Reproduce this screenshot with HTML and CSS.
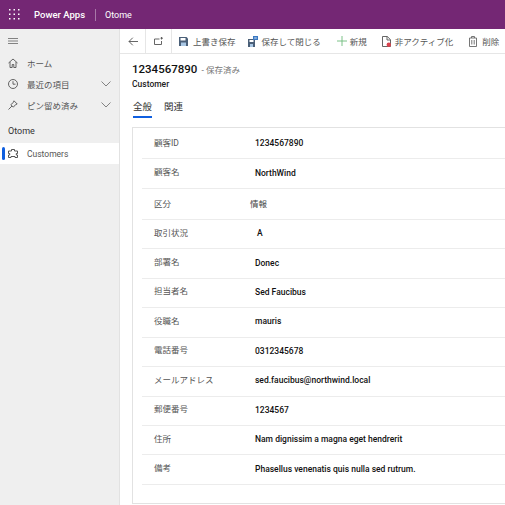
FILE: index.html
```html
<!DOCTYPE html>
<html lang="ja">
<head>
  <meta charset="UTF-8">
  <title>Customer - Power Apps</title>
  <link rel="stylesheet" href="styles.css">
</head>
<body>

<header class="topbar">
  <svg class="waffle" width="11" height="11" viewBox="0 0 11 11" fill="#fff">
    <rect x="0" y="0" width="1.500" height="1.500"/><rect x="4.500" y="0" width="1.500" height="1.500"/><rect x="9" y="0" width="1.500" height="1.500"/>
    <rect x="0" y="4.500" width="1.500" height="1.500"/><rect x="4.500" y="4.500" width="1.500" height="1.500"/><rect x="9" y="4.500" width="1.500" height="1.500"/>
    <rect x="0" y="9" width="1.500" height="1.500"/><rect x="4.500" y="9" width="1.500" height="1.500"/><rect x="9" y="9" width="1.500" height="1.500"/>
  </svg>
  <span class="brand">Power Apps</span>
  <span class="app-name">Otome</span>
</header>

<div class="main">
  <nav class="sidebar">
    <svg class="hamburger" width="10" height="6" viewBox="0 0 10 6" stroke="#666" stroke-width=".8" fill="none">
      <path d="M0 .5h10M0 3h10M0 5.500h10"/>
    </svg>
    <div class="nav-item first">
      <svg width="10" height="10" viewBox="0 0 10 10" fill="none" stroke="#555" stroke-width=".9"><path d="M.5 5L5 1l4.500 4M2 4v5.500h2.200V6.500h1.600v3H8V4"/></svg>
      <span>ホーム</span>
    </div>
    <div class="nav-item">
      <svg width="10" height="10" viewBox="0 0 10 10" fill="none" stroke="#555" stroke-width=".9"><circle cx="5" cy="5" r="4.500"/><path d="M5 2.200v3h2.500"/></svg>
      <span>最近の項目</span>
      <svg class="chevron" width="10" height="6" viewBox="0 0 10 6" fill="none" stroke="#666" stroke-width=".8"><path d="M.5.500L5 5 9.500.500"/></svg>
    </div>
    <div class="nav-item">
      <svg width="10" height="10" viewBox="0 0 10 10" fill="none" stroke="#555" stroke-width=".9"><path d="M6 .8L9.200 4 7.500 4.700 5.300 7.200 2.800 4.700 5.300 2.500zM4 6L.5 9.500"/></svg>
      <span>ピン留め済み</span>
      <svg class="chevron" width="10" height="6" viewBox="0 0 10 6" fill="none" stroke="#666" stroke-width=".8"><path d="M.5.500L5 5 9.500.500"/></svg>
    </div>
    <div class="nav-group">Otome</div>
    <div class="nav-item active">
      <svg width="10" height="10" viewBox="0 0 10 10" fill="none" stroke="#444" stroke-width=".9"><path d="M3.500.5h3v1.500h3v2.500H8.300v1.500h1.200v2.500h-2.500V7.500H3v1H.5V6h1.200V4.500H.5V2h3z"/></svg>
      <span>Customers</span>
    </div>
  </nav>

  <div class="content">
    <div class="cmdbar">
      <div class="cmd-nav">
        <svg width="10" height="9" viewBox="0 0 10 9" fill="none" stroke="#555" stroke-width=".9"><path d="M10 4.500H1M4.800.7L1 4.500l3.800 3.800"/></svg>
      </div>
      <div class="cmd-nav">
        <svg width="9" height="8" viewBox="0 0 9 8" fill="none" stroke="#555" stroke-width=".9"><path d="M5.500 2H.5v5.500h7V4M7.500 0v2.500M6.500 1.200h2.500"/></svg>
      </div>
      <div class="cmd save">
        <svg width="9" height="9" viewBox="0 0 9 9"><path d="M0 0h7.500L9 1.500V9H0z" fill="#4a5f78"/><path d="M1.500 1h5v2.500h-5z" fill="#fff"/><path d="M2 5.500h5V9H2z" fill="#a9c7e4"/></svg>
        <span>上書き保存</span>
      </div>
      <div class="cmd save-close">
        <svg width="10" height="11" viewBox="0 0 10 11"><path d="M0 3h7v8H0z" fill="#4a5f78"/><path d="M1.500 4h4v2h-4z" fill="#fff"/><path d="M2 8h3v3H2z" fill="#a9c7e4"/><path d="M5 0h5v4H5z" fill="#3a78c2"/><path d="M6.200 2h2.600" stroke="#fff" stroke-width=".8"/></svg>
        <span>保存して閉じる</span>
      </div>
      <div class="cmd new">
        <svg width="10" height="10" viewBox="0 0 10 10" fill="none" stroke="#6dbb7c" stroke-width=".9"><path d="M5 0v10M0 5h10"/></svg>
        <span>新規</span>
      </div>
      <div class="cmd deactivate">
        <svg width="9" height="11" viewBox="0 0 9 11"><path d="M.5.500h4.800L8.500 3.700v6.800H.5zM5 .5v3.500h3.500" fill="none" stroke="#555" stroke-width=".9"/><circle cx="6.800" cy="8.800" r="2.200" fill="#d9434e"/></svg>
        <span>非アクティブ化</span>
      </div>
      <div class="cmd delete">
        <svg width="8" height="11" viewBox="0 0 8 11" fill="none" stroke="#666" stroke-width=".9"><path d="M.5 2h7v8.500h-7zM2.500 2V.5h3V2M2.800 4v4.500M5.200 4v4.500"/></svg>
        <span>削除</span>
      </div>
    </div>

    <div class="record-head">
      <div class="record-title">
        <span class="record-id">1234567890</span>
        <span class="record-state">- 保存済み</span>
      </div>
      <div class="record-type">Customer</div>
    </div>

    <div class="tabs">
      <div class="tab selected">全般</div>
      <div class="tab">関連</div>
    </div>

    <section class="card">
      <div class="row"><div class="label">顧客ID</div><div class="value">1234567890</div></div>
      <div class="row"><div class="label">顧客名</div><div class="value">NorthWind</div></div>
      <div class="row tall"><div class="label">区分</div><div class="value plain">情報</div></div>
      <div class="row"><div class="label">取引状況</div><div class="value option">A</div></div>
      <div class="row"><div class="label">部署名</div><div class="value">Donec</div></div>
      <div class="row"><div class="label">担当者名</div><div class="value">Sed Faucibus</div></div>
      <div class="row"><div class="label">役職名</div><div class="value">mauris</div></div>
      <div class="row"><div class="label">電話番号</div><div class="value">0312345678</div></div>
      <div class="row"><div class="label">メールアドレス</div><div class="value">sed.faucibus@northwind.local</div></div>
      <div class="row"><div class="label">郵便番号</div><div class="value">1234567</div></div>
      <div class="row"><div class="label">住所</div><div class="value">Nam dignissim a magna eget hendrerit</div></div>
      <div class="row"><div class="label">備考</div><div class="value">Phasellus venenatis quis nulla sed rutrum.</div></div>
    </section>
  </div>
</div>

</body>
</html>
```

FILE: styles.css
```css
body {
  margin: 0;
  width: 505px;
  height: 505px;
  overflow: hidden;
  background-color: white;
  color: #222;
  font-family: Roboto, "Noto Sans CJK JP", sans-serif;
  font-size: 8.500px;
  display: flex;
  flex-direction: column;
}

.topbar {
  height: 29px;
  flex: none;
  background-color: #742774;
  color: white;
  display: flex;
  align-items: center;
}

.waffle {
  margin-left: 9px;
}

.brand {
  margin-left: 14px;
  font-size: 9.500px;
  font-weight: 500;
}

.app-name {
  margin-left: 10px;
  padding-left: 9px;
  border-left: 1px solid #a878a8;
  line-height: 12px;
  font-size: 9px;
}

.main {
  flex: 1;
  display: flex;
  min-height: 0;
}

.sidebar {
  width: 119px;
  flex: none;
  background-color: #efefef;
  border-right: 1px solid #e2e2e2;
}

.hamburger {
  display: block;
  margin: 9px 0 0 8px;
}

.nav-item {
  height: 21px;
  display: flex;
  align-items: center;
  padding-left: 8px;
  gap: 9px;
  position: relative;
}

.nav-item.first {
  margin-top: 8px;
}

.nav-item span {
  color: #555;
}

.chevron {
  position: absolute;
  right: 8px;
  top: 8px;
}

.nav-group {
  margin-top: 6px;
  height: 21px;
  padding-left: 8px;
  font-size: 9px;
  line-height: 21px;
  color: #333;
}

.nav-item.active {
  background-color: white;
  margin-top: 1px;
}

.nav-item.active::before {
  content: "";
  position: absolute;
  left: 2px;
  top: 4px;
  width: 3px;
  height: 13px;
  border-radius: 2px;
  background-color: #0f5fe0;
}

.content {
  flex: 1;
  min-width: 0;
}

.cmdbar {
  height: 24px;
  display: flex;
  align-items: center;
  border-bottom: 1px solid #e6e6e6;
  white-space: nowrap;
}

.cmd-nav {
  width: 25px;
  height: 24px;
  border-right: 1px solid #e6e6e6;
  display: flex;
  align-items: center;
  justify-content: center;
  flex: none;
}

.cmd {
  display: flex;
  align-items: center;
  gap: 5px;
  color: #555;
  flex: none;
}

.cmd.save {
  margin-left: 7px;
}

.cmd.save-close {
  margin-left: 12px;
  gap: 4px;
}

.cmd.new {
  margin-left: 16px;
  gap: 3px;
}

.cmd.deactivate {
  margin-left: 15px;
  gap: 4px;
}

.cmd.delete {
  margin-left: 16px;
}

.record-head {
  padding: 8px 0 0 12px;
}

.record-id {
  font-size: 11.500px;
  font-weight: 500;
  color: #111;
}

.record-state {
  color: #777;
  margin-left: 2px;
}

.record-type {
  margin-top: 3px;
  font-size: 8.500px;
  font-weight: 500;
}

.tabs {
  display: flex;
  gap: 12px;
  margin: 10px 0 0 13px;
  font-size: 9.500px;
}

.tab {
  padding-bottom: 3px;
  color: #333;
}

.tab.selected {
  border-bottom: 2px solid #0f5fe0;
}

.card {
  margin: 9px -10px 0 12px;
  padding: 2px 0 18px 9px;
  border: 1px solid #e2e2e2;
}

.row {
  height: 29.450px;
  box-sizing: border-box;
  border-bottom: 1px solid #ececec;
  display: flex;
  align-items: center;
  padding-left: 12px;
}

.row.tall {
  height: 31px;
}

.row.tall .label {
  margin-top: -2px;
}

.label {
  width: 101px;
  flex: none;
  color: #555;
  margin-top: -5px;
}

.value {
  font-size: 8.500px;
  font-weight: 500;
  color: #111;
  margin-top: -2px;
}

.value.plain {
  margin-left: -5px;
  font-weight: 400;
  color: #444;
}

.value.option {
  margin-left: 2px;
}
```
